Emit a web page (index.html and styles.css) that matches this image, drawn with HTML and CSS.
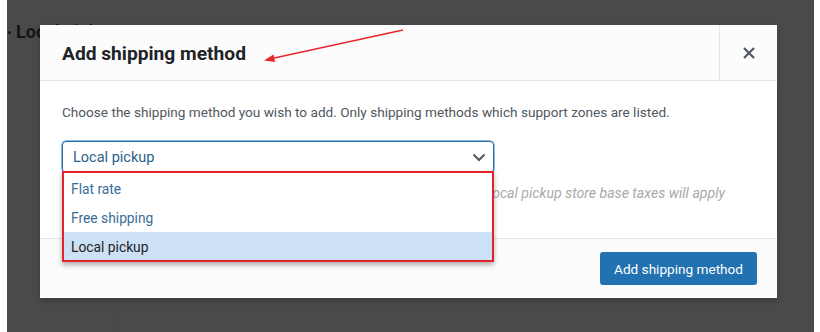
FILE: index.html
```html
<!DOCTYPE html>
<html lang="en">
<head>
<meta charset="utf-8">
<title>Add shipping method</title>
<link rel="stylesheet" href="styles.css">
</head>
<body>
<div class="backdrop">
  <div class="page-heading"><span class="bullet"></span>Local pickup</div>
  <div class="page-spacer"></div>
  <div class="page-bottom">
    <div class="page-side"></div>
    <div class="page-text">Lorem ipsum shipping zone details and settings for this region and its methods</div>
  </div>

  <div class="modal">
    <header class="modal-header">
      <h1 class="modal-title">Add shipping method</h1>
      <button class="modal-close" aria-label="Close">
        <svg width="14" height="14" viewBox="0 0 14 14"><path d="M2 2 L12 12 M12 2 L2 12" stroke="#50575e" stroke-width="2.2" stroke-linecap="butt"/></svg>
      </button>
    </header>
    <div class="modal-body">
      <p class="intro">Choose the shipping method you wish to add. Only shipping methods which support zones are listed.</p>
      <div class="select">
        <span class="select-value">Local pickup</span>
        <svg class="chevron" width="14" height="9" viewBox="0 0 14 9"><path d="M1.5 1.5 L7 7 L12.5 1.5" fill="none" stroke="#50575e" stroke-width="2"/></svg>
      </div>
      <p class="method-desc">When using Local pickup store base taxes will apply</p>
      <ul class="dropdown">
        <li class="option first">Flat rate</li>
        <li class="option">Free shipping</li>
        <li class="option selected">Local pickup</li>
      </ul>
    </div>
    <footer class="modal-footer">
      <button class="btn-primary">Add shipping method</button>
    </footer>
  </div>

  <svg class="arrow" width="820" height="100" viewBox="0 0 820 100">
    <line x1="403" y1="30" x2="272" y2="58.5" stroke="#e8262b" stroke-width="1.4"/>
    <path d="M264 60.5 L273.5 54.5 L275 62 Z" fill="#e8262b"/>
  </svg>
</div>
</body>
</html>
```

FILE: styles.css
```css
* { box-sizing: border-box; }
html, body { margin: 0; padding: 0; }
body {
  background: #ffffff;
  width: 820px;
  height: 332px;
  overflow: hidden;
  font-family: Roboto, "Liberation Sans", sans-serif;
}
.backdrop {
  position: relative;
  margin: 0 6px 0 7px;
  height: 332px;
  background: #4a4a4a;
  display: flex;
  flex-direction: column;
  overflow: hidden;
}
.page-heading {
  padding: 19px 0 0 1px;
  font-size: 18px;
  font-weight: 700;
  color: #141414;
  display: flex;
  align-items: center;
  gap: 5px;
  height: 44px;
}
.bullet {
  display: inline-block;
  width: 3px;
  height: 3px;
  background: #141414;
  border-radius: 50%;
  margin-top: 2px;
}
.page-spacer { flex: 1; }
.page-bottom {
  display: flex;
  height: 35px;
}
.page-side {
  width: 111px;
  border-right: 1px solid #454545;
}
.page-text {
  padding: 33px 0 0 32px;
  font-size: 16px;
  color: #2b1d2a;
  white-space: nowrap;
  letter-spacing: 1px;
}

/* modal */
.modal {
  position: absolute;
  left: 33px;
  top: 25px;
  width: 737px;
  height: 273px;
  background: #ffffff;
  display: flex;
  flex-direction: column;
  box-shadow: 0 3px 6px rgba(0,0,0,0.2);
}
.modal-header {
  height: 56px;
  flex: none;
  background: #fcfcfc;
  border-bottom: 1px solid #e5e5e5;
  display: flex;
  align-items: stretch;
}
.modal-title {
  flex: 1;
  margin: 0;
  padding: 1px 0 0 22px;
  font-size: 19.2px;
  font-weight: 700;
  color: #1d2327;
  line-height: 55px;
}
.modal-close {
  width: 58px;
  border: 0;
  border-left: 1px solid #e5e5e5;
  background: transparent;
  display: flex;
  align-items: center;
  justify-content: center;
  padding: 0 0 0 1px;
}
.modal-body {
  position: relative;
  flex: 1;
  padding: 22px 22px 0;
  background: #ffffff;
}
.intro {
  margin: 0;
  font-size: 13.6px;
  line-height: 18px;
  color: #50575e;
}
.select {
  margin-top: 20px;
  width: 432px;
  height: 32px;
  border: 1px solid #2271b1;
  border-radius: 4px;
  box-shadow: 0 0 0 0.5px #2271b1;
  display: flex;
  align-items: center;
  justify-content: space-between;
  padding: 0 7px 0 10px;
}
.select-value {
  font-size: 14.5px;
  color: #2c5e8a;
}
.chevron { margin-top: 1px; }
.method-desc {
  margin: 11px 0 0;
  width: 663px;
  text-align: right;
  font-size: 14.1px;
  font-style: italic;
  color: #a7aaad;
  white-space: nowrap;
  line-height: 18px;
}
.dropdown {
  position: absolute;
  left: 22px;
  top: 90px;
  width: 432px;
  margin: 0;
  padding: 0;
  list-style: none;
  background: #ffffff;
  border: 2px solid #e3222b;
  box-shadow: 0 3px 5px rgba(0,0,0,0.3);
}
.option {
  height: 29px;
  line-height: 31px;
  padding-left: 7px;
  font-size: 13.8px;
  color: #3a6c98;
}
.option.first {
  height: 30px;
  line-height: 32px;
}
.option.selected {
  height: 28px;
  line-height: 30px;
  background: #cce0f6;
  color: #222;
}
.modal-footer {
  height: 60px;
  flex: none;
  background: #fcfcfc;
  border-top: 1px solid #e2e4e7;
  display: flex;
  align-items: center;
  justify-content: flex-end;
  padding: 0 20px 0 0;
}
.btn-primary {
  height: 33px;
  padding: 0 14px;
  background: #2271b1;
  color: #ffffff;
  border: 0;
  border-radius: 3px;
  font-family: Roboto, "Liberation Sans", sans-serif;
  font-size: 13.6px;
}
.arrow {
  position: absolute;
  left: -7px;
  top: 0;
  pointer-events: none;
}
```
